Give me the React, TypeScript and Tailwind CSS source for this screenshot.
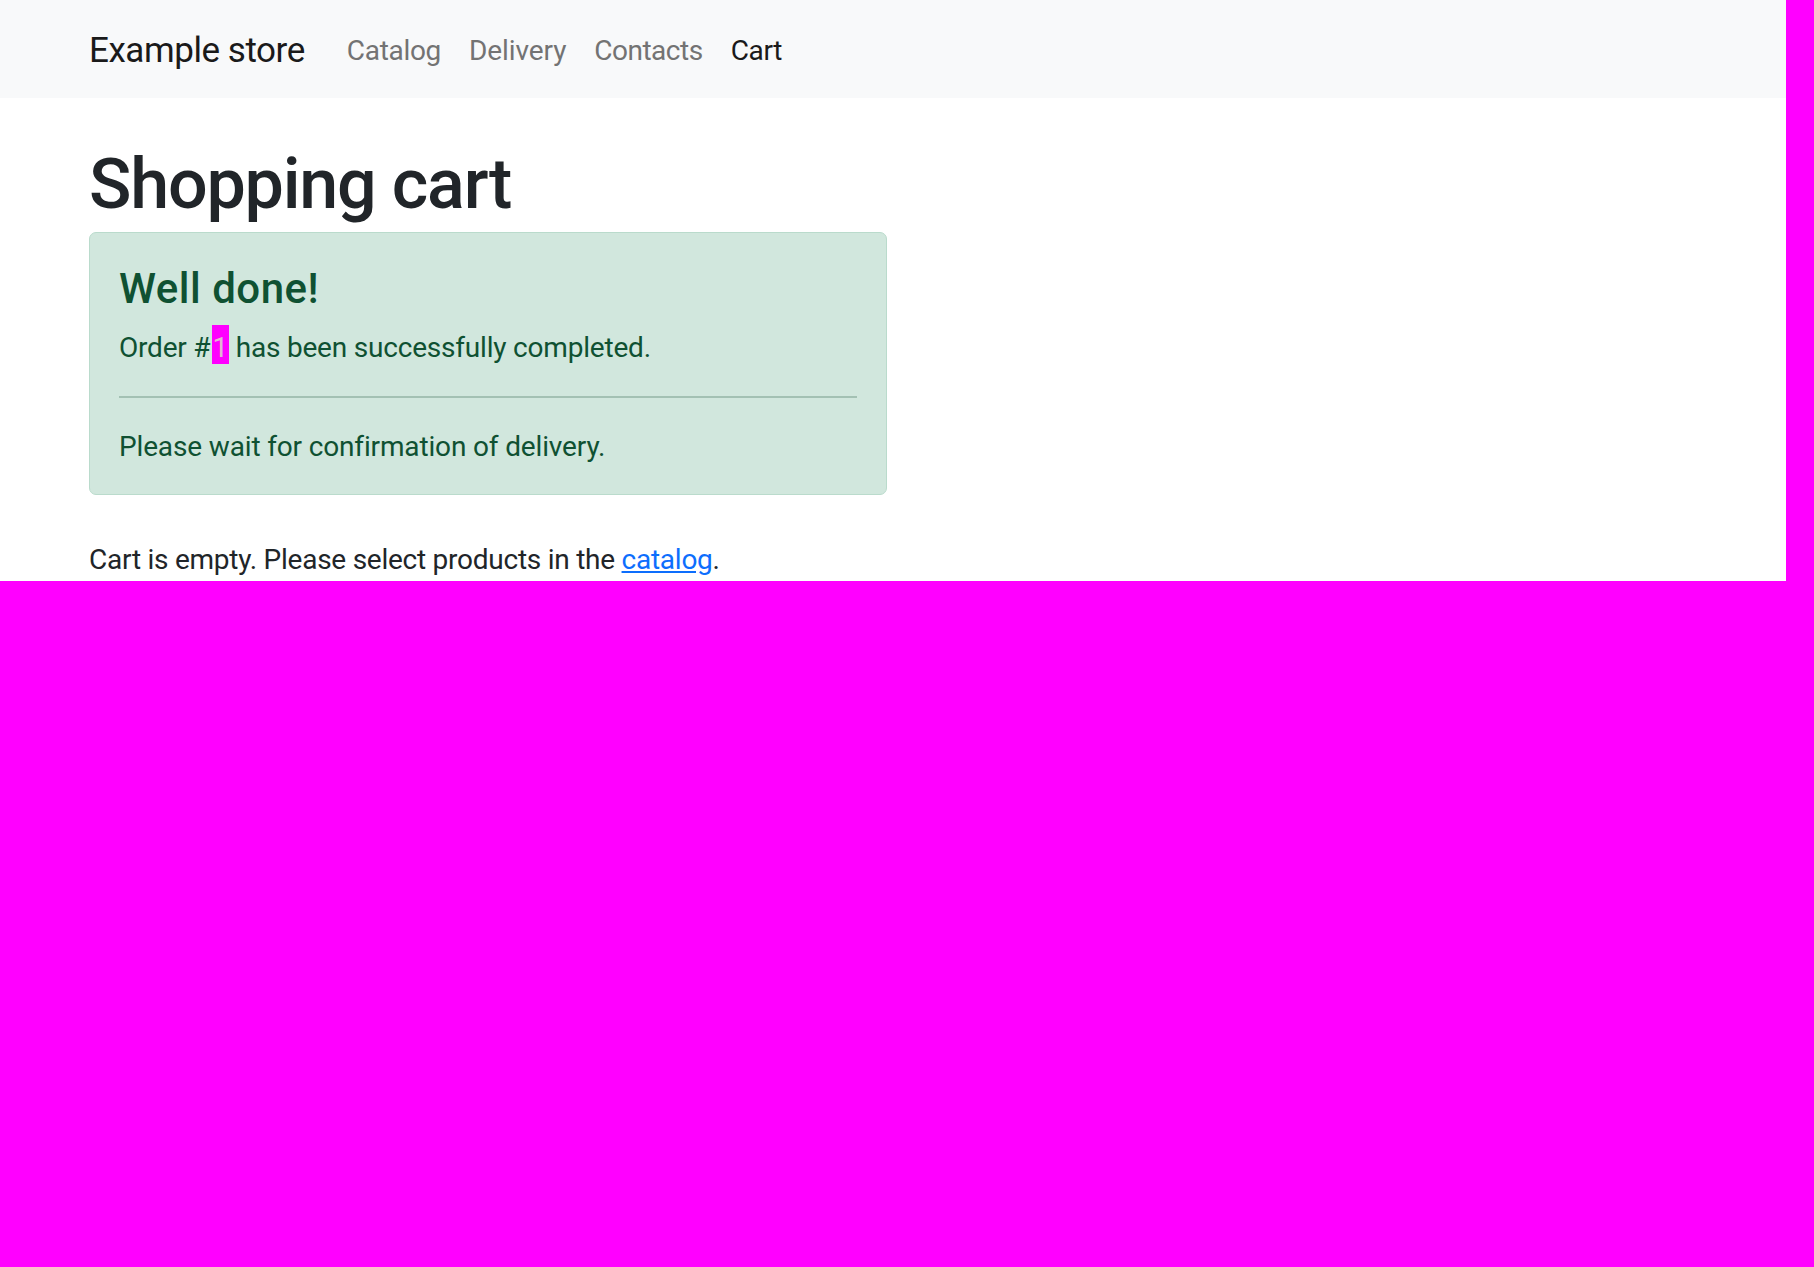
import React from "react";

export default function App() {
  const font = { fontFamily: '"Segoe UI", Roboto, "Liberation Sans", Arial, sans-serif' };
  return (
    <div className="min-h-screen w-full bg-[#ff00ff]" style={font}>
      <div className="w-[1786px] bg-white">
        <nav className="flex h-[98px] items-center bg-[#f8f9fa] pl-[89px] pt-[4px]">
          <a className="mr-[28px] text-[35px] leading-[52px] tracking-[-0.45px] text-[#1a1a1a]">Example store</a>
          <ul className="flex">
            <li><a className="block px-[14px] text-[28px] leading-[42px] tracking-[-0.3px] text-[#737373]">Catalog</a></li>
            <li><a className="block px-[14px] text-[28px] leading-[42px] tracking-[-0.1px] text-[#737373]">Delivery</a></li>
            <li><a className="block px-[14px] text-[28px] leading-[42px] tracking-[-0.5px] text-[#737373]">Contacts</a></li>
            <li><a className="block px-[14px] text-[28px] leading-[42px] tracking-[-0.3px] text-[#1a1a1a]">Cart</a></li>
          </ul>
        </nav>
        <main className="px-[89px]">
          <h1 className="mt-[44px] mb-[6px] text-[70px] font-medium leading-[84px] tracking-[-1.2px] text-[#212529]">Shopping cart</h1>
          <div className="w-[798px] rounded-[7px] border border-[#badbcc] bg-[#d1e7dd] px-[29px] pt-[31px] pb-[26px] text-[#0f5132]">
            <h4 className="mb-[13px] text-[42px] font-medium leading-[50px] tracking-[0.5px]">Well done!</h4>
            <p className="text-[28px] leading-[42px] tracking-[-0.2px]">
              Order #<span className="ml-[2px] bg-[#ff00ff] pt-[6px] pr-[1px] text-[#e2b6d2]">1</span> has been successfully completed.
            </p>
            <hr className="mt-[27px] mb-[28px] h-[2px] border-0 bg-[#a3c1b3]" />
            <p className="text-[28px] leading-[42px] tracking-[-0.15px]">Please wait for confirmation of delivery.</p>
          </div>
          <p className="mt-[44px] text-[28px] leading-[42px] tracking-[-0.25px] text-[#212529]">
            Cart is empty. Please select products in the{" "}
            <a className="text-[#0d6efd] underline">catalog</a>.
          </p>
        </main>
      </div>
    </div>
  );
}
